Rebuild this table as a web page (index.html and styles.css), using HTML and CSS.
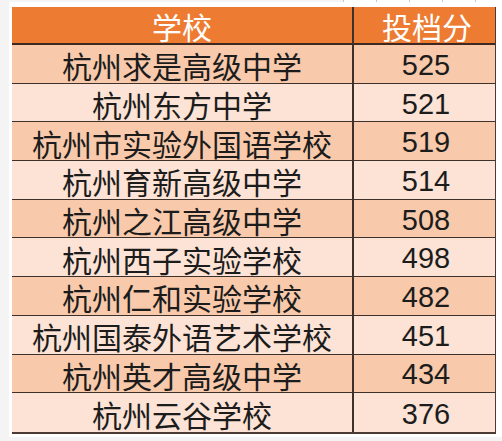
FILE: index.html
```html
<!DOCTYPE html>
<html lang="zh-CN">
<head>
<meta charset="utf-8">
<link rel="stylesheet" href="styles.css">
</head>
<body>
<div class="strip"></div>
<div class="sheet">
  <div class="table">
    <div class="cell head name">学校</div>
    <div class="cell head score">投档分</div>

    <div class="cell odd name">杭州求是高级中学</div>
    <div class="cell odd score">525</div>

    <div class="cell even name">杭州东方中学</div>
    <div class="cell even score">521</div>

    <div class="cell odd name">杭州市实验外国语学校</div>
    <div class="cell odd score">519</div>

    <div class="cell even name">杭州育新高级中学</div>
    <div class="cell even score">514</div>

    <div class="cell odd name">杭州之江高级中学</div>
    <div class="cell odd score">508</div>

    <div class="cell even name">杭州西子实验学校</div>
    <div class="cell even score">498</div>

    <div class="cell odd name">杭州仁和实验学校</div>
    <div class="cell odd score">482</div>

    <div class="cell even name">杭州国泰外语艺术学校</div>
    <div class="cell even score">451</div>

    <div class="cell odd name">杭州英才高级中学</div>
    <div class="cell odd score">434</div>

    <div class="cell even name">杭州云谷学校</div>
    <div class="cell even score">376</div>
  </div>
</div>
</body>
</html>
```

FILE: styles.css
```css
html, body {
  margin: 0;
  padding: 0;
}
body {
  background: #f4f4f4;
  width: 502px;
  height: 441px;
  overflow: hidden;
  font-family: "Noto Sans CJK SC", "Liberation Sans", sans-serif;
}
.strip {
  margin-left: 343px;
  height: 2px;
  background: repeating-linear-gradient(90deg, #c8c8c8 0, #c8c8c8 1px, #ffffff 1px, #ffffff 33px);
}
.sheet {
  margin-left: 9px;
  background: #ffffff;
  padding: 5px 0 3px 3px;
}
.table {
  display: grid;
  grid-template-columns: 342px 141px;
  grid-template-rows: 38px repeat(10, 38.7px);
  width: 483px;
  border-right: 1.5px solid #4a3a33;
  border-bottom: 2px solid #4a3a33;
  box-sizing: content-box;
}
.cell {
  display: flex;
  align-items: center;
  justify-content: center;
  border-bottom: 1.5px solid #3e302a;
  box-sizing: border-box;
  font-size: 30px;
  line-height: 1;
  color: #1c1c1c;
  padding-top: 3px;
}
.cell.name {
  border-right: 2px solid #3e302a;
}
.cell.score {
  font-family: "Liberation Sans", "Noto Sans CJK SC", sans-serif;
  font-size: 29px;
  padding-left: 3px;
}
.cell.head {
  background: #ed7b31;
  color: #ffffff;
  border-bottom: 2px solid #3e2a22;
  padding-top: 2px;
}
.cell.head.score {
  font-family: "Noto Sans CJK SC", sans-serif;
  font-size: 30px;
  padding-left: 5px;
}
.cell.odd {
  background: #f8caab;
}
.cell.even {
  background: #fce3d5;
}
.table > .cell:nth-last-child(-n+2) {
  border-bottom: none;
}
```
